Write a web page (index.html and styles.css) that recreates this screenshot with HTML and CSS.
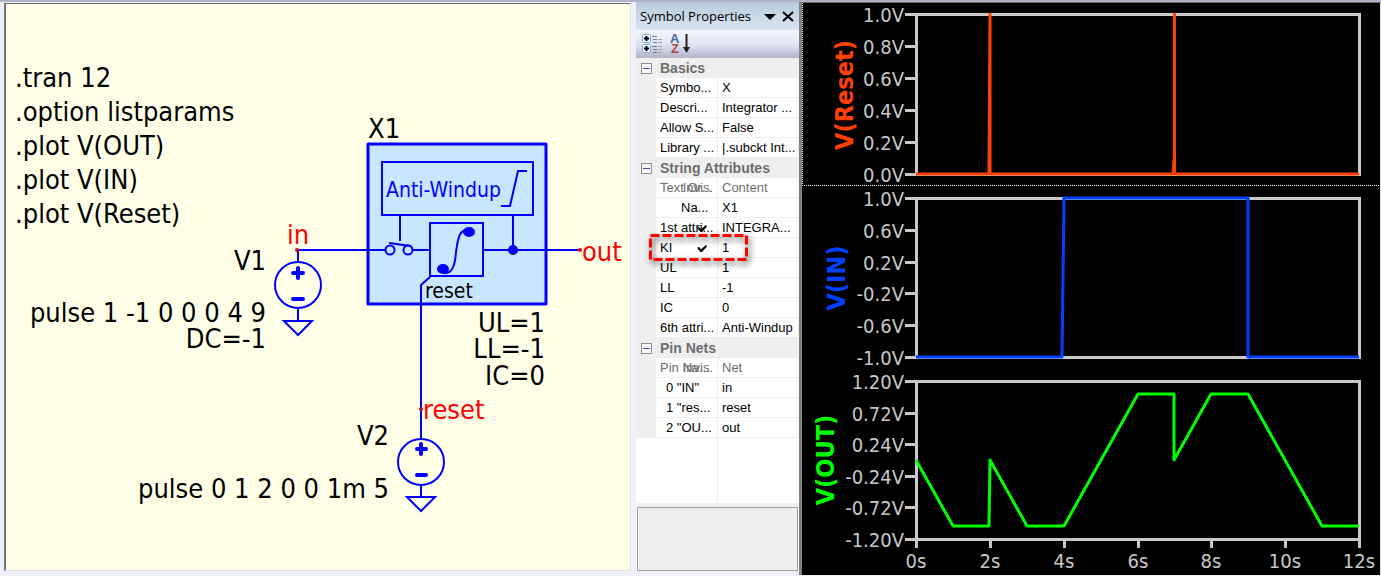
FILE: index.html
```
<!DOCTYPE html>
<html lang="en">
<head>
    <meta charset="UTF-8">
    <meta name="viewport" content="width=device-width, initial-scale=1.0">
    <title>Integrator with Anti-Windup</title>
    <link rel="stylesheet" href="styles.css">
</head>
<body>
    <main class="workspace">
        <section class="schematic">
            <svg viewBox="6 4 624 566" role="img" aria-label="Schematic">
                <!-- X1 body -->
                <rect class="block" x="368" y="144" width="178" height="160"/>
                <g class="wire">
                    <rect x="382" y="162" width="151" height="53"/>
                    <rect x="430" y="223" width="53" height="53"/>
                    <path d="M501 206H510L518 171H527"/>
                    <path d="M400 215V241M389 243L411 246M412 250H430M483 250H580M513 215V250"/>
                    <circle cx="390" cy="250" r="4.500"/>
                    <circle cx="408" cy="250" r="4.500"/>
                    <path d="M444 273C452 274 455 266 456 252C458 238 459 229 470 229"/>
                    <path d="M298 262V250H385M430 277L421 285V438"/>
                    <!-- V1 -->
                    <circle cx="298" cy="285" r="23"/>
                    <path d="M298 308V321M284 321H312L298 335Z"/>
                    <!-- V2 -->
                    <circle cx="421" cy="462" r="23"/>
                    <path d="M421 485V497M407 497H435L421 511Z"/>
                </g>
                <path class="sign" d="M293 273H303M298 268V278M293 299H303M417 449H426M421 444V454M417 475H426"/>
                <g class="dot">
                    <circle cx="513" cy="250" r="5"/>
                    <ellipse cx="469" cy="232" rx="6" ry="5"/>
                    <ellipse cx="443" cy="269" rx="6" ry="5"/>
                </g>
                <g class="pin">
                    <circle cx="297" cy="250" r="2"/>
                    <circle cx="580" cy="250" r="2"/>
                    <circle cx="421" cy="409" r="2"/>
                </g>

                <g class="label">
                    <text x="15" y="87">.tran 12</text>
                    <text x="15" y="121">.option listparams</text>
                    <text x="15" y="155">.plot V(OUT)</text>
                    <text x="15" y="189">.plot V(IN)</text>
                    <text x="15" y="223">.plot V(Reset)</text>
                    <text x="368" y="138">X1</text>
                </g>
                <g class="label end">
                    <text x="266" y="270">V1</text>
                    <text x="266" y="322">pulse 1 -1 0 0 0 4 9</text>
                    <text x="266" y="348">DC=-1</text>
                    <text x="545" y="332">UL=1</text>
                    <text x="545" y="358">LL=-1</text>
                    <text x="545" y="385">IC=0</text>
                    <text x="389" y="445">V2</text>
                    <text x="389" y="498">pulse 0 1 2 0 0 1m 5</text>
                </g>
                <g class="label net">
                    <text x="287" y="244">in</text>
                    <text x="582" y="261">out</text>
                    <text x="423" y="419">reset</text>
                </g>
                <text class="inner blue" x="386" y="197">Anti-Windup</text>
                <text class="inner" x="425" y="298">reset</text>
            </svg>
        </section>

        <aside class="properties">
            <header class="panel-title">
                <h2>Symbol Properties</h2>
                <button type="button" aria-label="Options">
                    <svg width="12" height="12" viewBox="0 0 12 12"><path d="M0 4H12L6 10Z"/></svg>
                </button>
                <button type="button" aria-label="Close">
                    <svg width="12" height="12" viewBox="0 0 12 12"><path class="cross" d="M1 2L11 11M11 2L1 11"/></svg>
                </button>
            </header>
            <div class="toolbar">
                <button type="button" aria-label="Categorized">
                    <svg width="22" height="22" viewBox="0 0 22 22">
                        <g fill="#eef6ff" stroke="#7ba7d0"><rect x="1.500" y="1.500" width="8" height="8" rx="1"/><rect x="1.500" y="11.500" width="8" height="8" rx="1"/></g>
                        <path d="M3 5.500H8M5.500 3V8M3 15.500H8M5.500 13V18" stroke="#000" stroke-width="2"/>
                        <path d="M11 3.500H16M12 6.500H16M12 9.500H16M11 13.500H16M12 16.500H16M12 19.500H16" stroke="#707b90"/>
                        <path d="M17 6.500H21M17 9.500H21M17 13.500H21M17 16.500H21M17 19.500H21" stroke="#9aa79f"/>
                    </svg>
                </button>
                <button type="button" aria-label="Alphabetical">
                    <svg width="22" height="22" viewBox="0 0 22 22">
                        <text class="icon-a" x="1" y="10">A</text>
                        <text class="icon-z" x="2" y="20">Z</text>
                        <path d="M17.500 1V18" stroke="#222" stroke-width="2"/>
                        <path d="M14 14H21L17.500 20Z" fill="#222"/>
                    </svg>
                </button>
            </div>
            <table class="grid">
                <colgroup><col class="col-gutter"><col class="col-name"><col></colgroup>
                <tbody>
                    <tr class="category"><td><button type="button" aria-label="Collapse Basics"></button></td><th colspan="2">Basics</th></tr>
                    <tr><td></td><td>Symbo...</td><td>X</td></tr>
                    <tr><td></td><td>Descri...</td><td>Integrator ...</td></tr>
                    <tr><td></td><td>Allow S...</td><td>False</td></tr>
                    <tr><td></td><td>Library ...</td><td>|.subckt Int...</td></tr>
                </tbody>
                <tbody>
                    <tr class="category"><td><button type="button" aria-label="Collapse String Attributes"></button></td><th colspan="2">String Attributes</th></tr>
                    <tr class="heading"><td></td><td>Text Or...<span class="over">Invis.</span></td><td>Content</td></tr>
                    <tr><td></td><td class="indent">Na...</td><td>X1</td></tr>
                    <tr><td></td><td>1st attri...<input class="tick" type="checkbox" aria-label="1st attribute visible" checked></td><td>INTEGRA...</td></tr>
                    <tr>
                        <td></td>
                        <td>
                            <label for="ki">KI</label><input class="tick" id="ki" type="checkbox" checked>
                            <svg class="marker" width="99" height="27" viewBox="0 0 99 27"><rect x="1.500" y="1.500" width="96" height="24"/></svg>
                        </td>
                        <td>1</td>
                    </tr>
                    <tr><td></td><td>UL</td><td>1</td></tr>
                    <tr><td></td><td>LL</td><td>-1</td></tr>
                    <tr><td></td><td>IC</td><td>0</td></tr>
                    <tr><td></td><td>6th attri...</td><td>Anti-Windup</td></tr>
                </tbody>
                <tbody>
                    <tr class="category"><td><button type="button" aria-label="Collapse Pin Nets"></button></td><th colspan="2">Pin Nets</th></tr>
                    <tr class="heading"><td></td><td>Pin Na...<span class="over">Invis.</span></td><td>Net</td></tr>
                    <tr><td></td><td class="pin-name">0 "IN"</td><td>in</td></tr>
                    <tr><td></td><td class="pin-name">1 "res...</td><td>reset</td></tr>
                    <tr><td></td><td class="pin-name">2 "OU...</td><td>out</td></tr>
                </tbody>
            </table>
            <div class="grid-rest"></div>
            <div class="description"></div>
        </aside>

        <section class="plots">
            <svg viewBox="802 3 578 572" role="img" aria-label="Waveforms">
                <path class="selection" d="M802.500 3V185.500H1380"/>
                <!-- axes -->
                <g class="axis">
                    <path d="M905 14.500H1359.500V174.500H905M916.500 14V174M905 46.500H916M905 78.500H916M905 110.500H916M905 142.500H916"/>
                    <path d="M905 198.500H1359.500V357.500H905M916.500 198V357M905 230.500H916M905 262.500H916M905 293.500H916M905 325.500H916"/>
                    <path d="M905 381.500H1359.500V539.500H905M916.500 381V539M905 413.500H916M905 444.500H916M905 476.500H916M905 507.500H916"/>
                    <path d="M916.500 539V548M990.500 539V548M1064.500 539V548M1138.500 539V548M1211.500 539V548M1285.500 539V548M1359.500 539V548"/>
                </g>
                <g class="scale">
                    <text x="904" y="22">1.0V</text>
                    <text x="904" y="54">0.8V</text>
                    <text x="904" y="86">0.6V</text>
                    <text x="904" y="118">0.4V</text>
                    <text x="904" y="150">0.2V</text>
                    <text x="904" y="182">0.0V</text>
                    <text x="904" y="206">1.0V</text>
                    <text x="904" y="238">0.6V</text>
                    <text x="904" y="270">0.2V</text>
                    <text x="904" y="301">-0.2V</text>
                    <text x="904" y="333">-0.6V</text>
                    <text x="904" y="365">-1.0V</text>
                    <text x="904" y="389">1.20V</text>
                    <text x="904" y="421">0.72V</text>
                    <text x="904" y="452">0.24V</text>
                    <text x="904" y="484">-0.24V</text>
                    <text x="904" y="515">-0.72V</text>
                    <text x="904" y="547">-1.20V</text>
                </g>
                <g class="scale time">
                    <text x="916" y="568">0s</text>
                    <text x="990" y="568">2s</text>
                    <text x="1064" y="568">4s</text>
                    <text x="1138" y="568">6s</text>
                    <text x="1211" y="568">8s</text>
                    <text x="1285" y="568">10s</text>
                    <text x="1359" y="568">12s</text>
                </g>
                <text class="trace-name reset" transform="translate(853 95) rotate(-90)">V(Reset)</text>
                <text class="trace-name in" transform="translate(845 278) rotate(-90)">V(IN)</text>
                <text class="trace-name out" transform="translate(834 460) rotate(-90)">V(OUT)</text>
                <!-- traces -->
                <path class="trace reset" d="M916 174H989L990 14V174H1173L1174.500 154V14V174H1359"/>
                <path class="trace in" d="M916 357H1062L1064 198H1248V357H1359"/>
                <path class="trace out" d="M916 460L953 526H989L990 460L1027 526H1064L1138 394H1174V460L1211 394H1248L1322 526H1359"/>
            </svg>
        </section>
    </main>
</body>
</html>
```
FILE: styles.css
```
* {
    box-sizing: border-box;
}
body, html {
    margin: 0;
    padding: 0;
    min-height: 100vh;
    font-family: "Liberation Sans", sans-serif;
    font-size: 13px;
    color: #000;
    background: #eef0fb;
}
button {
    padding: 0;
    border: 0;
    background: none;
    font: inherit;
}
svg {
    display: block;
}
.workspace {
    display: grid;
    grid-template-columns: minmax(0, 631fr) 168px minmax(0, 582fr);
    min-height: 100vh;
    border-top: 2px solid #b0b3c8;
}

/* Schematic */
.schematic {
    margin: 1px 0 5px 4px;
    border: 1px solid #e0e0e0;
    border-top-color: #6a6a6a;
    border-left: 2px solid #777;
    background: #ffffe8;
}
.schematic svg {
    width: 100%;
}
.block {
    fill: #c8e6ff;
    stroke: #00f;
    stroke-width: 3;
    stroke-linejoin: round;
}
.wire {
    fill: none;
    stroke: #00f;
    stroke-width: 2;
}
.sign {
    stroke: #00f;
    stroke-width: 4;
    stroke-linecap: round;
}
.dot {
    fill: #00f;
}
.pin {
    fill: #e00020;
}
.label,
.inner,
.scale,
.trace-name {
    font-family: "DejaVu Sans Condensed", "Noto Sans", sans-serif;
}
.label {
    font-size: 27px;
}
.end {
    text-anchor: end;
}
.net {
    fill: #f00;
}
.inner {
    font-size: 21px;
}
.blue {
    fill: #00f;
}

/* Symbol properties */
.properties {
    display: flex;
    flex-direction: column;
    margin: 0 0 5px 5px;
    background: #fff;
}
.panel-title {
    display: flex;
    align-items: center;
    gap: 6px;
    height: 28px;
    padding: 0 5px 0 4px;
    background: linear-gradient(#b8cbdc, #d8e5f0);
}
.panel-title h2 {
    flex: 1;
    margin: 0;
    font-family: "Open Sans", sans-serif;
    font-size: 13px;
    font-weight: normal;
    white-space: nowrap;
}
.cross {
    stroke: #000;
    stroke-width: 2;
}
.toolbar {
    display: flex;
    align-items: center;
    gap: 6px;
    height: 28px;
    padding: 0 5px;
    background: linear-gradient(#f5f7fd, #e1e4f1 50%, #b2b4cb);
}
.toolbar svg {
    overflow: visible;
}
.icon-a,
.icon-z {
    font-size: 13px;
    font-weight: bold;
}
.icon-a {
    fill: #4767a8;
}
.icon-z {
    fill: #a84848;
}
.grid {
    width: 100%;
    table-layout: fixed;
    border-collapse: separate;
    border-spacing: 0;
}
.col-gutter {
    width: 20px;
}
.col-name {
    width: 62px;
}
.grid tr {
    height: 20px;
}
.grid td {
    position: relative;
    padding: 1px 0 0 4px;
    border-right: 1px solid #efefef;
    border-bottom: 1px solid #efefef;
    line-height: 18px;
    white-space: nowrap;
}
.grid td:first-child,
.grid .category th {
    padding: 0 0 0 4px;
    border: 0;
    background: #efefef;
}
.category th {
    color: #6d6d6d;
    font-size: 14px;
    line-height: 20px;
    text-align: left;
}
.category button {
    display: block;
    width: 11px;
    height: 11px;
    margin-left: 1px;
    border: 1px solid #8e8f8f;
    background: linear-gradient(#3c50a8, #3c50a8) center / 7px 1px no-repeat #f8f8f8;
}
.heading {
    color: #6d6d6d;
}
.over {
    position: absolute;
    right: 4px;
}
.grid .indent {
    padding-left: 25px;
}
.grid .pin-name {
    padding-left: 10px;
}
.tick {
    position: absolute;
    top: 7px;
    right: 10px;
    width: 10px;
    height: 7px;
    margin: 0;
    appearance: none;
}
.tick:checked {
    background: #000;
    clip-path: polygon(0 40%, 20% 30%, 40% 60%, 90% 0, 100% 20%, 50% 100%, 35% 100%);
}
.marker {
    position: absolute;
    z-index: 1;
    top: -4px;
    left: -7px;
    overflow: visible;
    filter: drop-shadow(2px 3px 3px rgba(0, 0, 0, 0.7));
    pointer-events: none;
}
.marker rect {
    fill: none;
    stroke: #f00;
    stroke-width: 3;
    stroke-dasharray: 9 3;
}
.grid-rest {
    flex: 1;
    width: 82px;
    border-right: 1px solid #efefef;
}
.description {
    height: 64px;
    margin: 0 1px;
    border: 1px solid #a0a0a0;
    background: #efefef;
    box-shadow: 0 -4px #efefef;
}

/* Waveforms */
.plots {
    margin-bottom: 1px;
    border-top: 1px solid #6a6a6a;
    border-right: 1px solid #e0e0e0;
    border-left: 3px solid #808080;
    background: #000;
}
.plots svg {
    width: 100%;
}
.axis {
    fill: none;
    stroke: #c8c8c8;
    stroke-width: 3;
}
.scale {
    fill: #c8c8c8;
    font-size: 20px;
    text-anchor: end;
}
.time {
    text-anchor: middle;
}
.selection {
    fill: none;
    stroke: #fff;
    stroke-dasharray: 1 1;
}
.trace-name {
    font-size: 25px;
    font-weight: bold;
    text-anchor: middle;
}
.trace {
    fill: none;
    stroke-width: 3;
    stroke-linejoin: round;
}
.trace-name.reset {
    fill: #ff4000;
}
.trace-name.in {
    fill: #0040ff;
}
.trace-name.out {
    fill: #0f0;
}
.trace.reset {
    stroke: #ff4000;
}
.trace.in {
    stroke: #0040ff;
}
.trace.out {
    stroke: #0f0;
}
```
